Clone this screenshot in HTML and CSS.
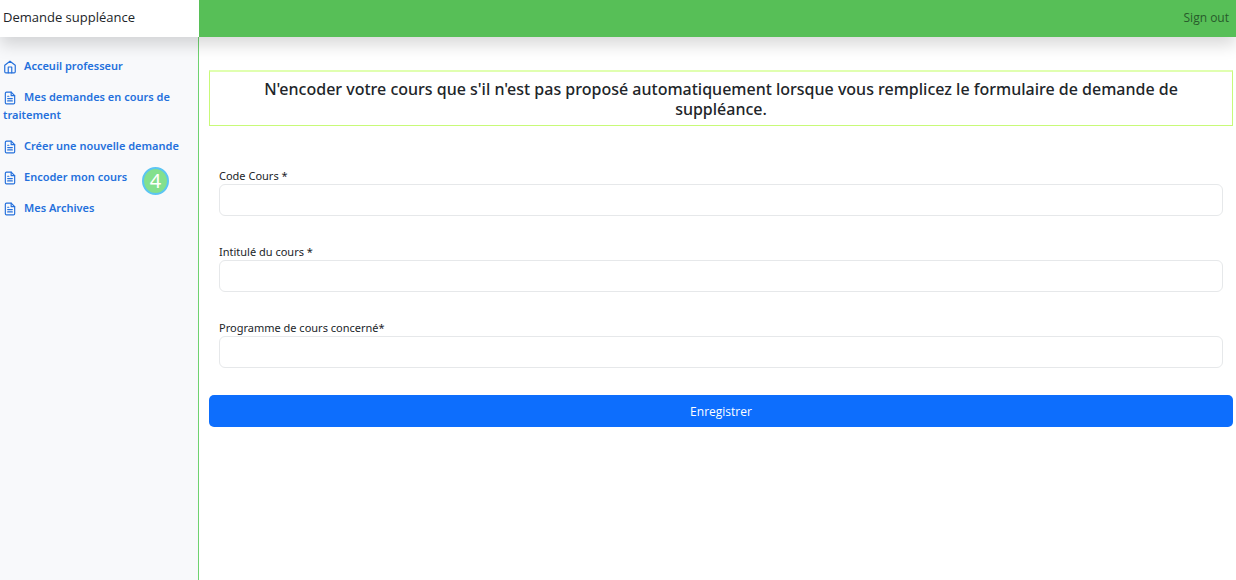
FILE: index.html
```html
<!DOCTYPE html>
<html lang="fr">
<head>
<meta charset="utf-8">
<meta name="viewport" content="width=device-width, initial-scale=1">
<title>Demande suppléance</title>
<link rel="stylesheet" href="styles.css">
</head>
<body>
<svg class="symbols" aria-hidden="true">
  <symbol id="icon-home" viewBox="0 0 24 24"><path d="M3 9l9-7 9 7v11a2 2 0 0 1-2 2H5a2 2 0 0 1-2-2z"/><path d="M9 22V12h6v10"/></symbol>
  <symbol id="icon-file" viewBox="0 0 24 24"><path d="M14 2H6a2 2 0 0 0-2 2v16a2 2 0 0 0 2 2h12a2 2 0 0 0 2-2V8z"/><path d="M14 2v6h6M16 13H8M16 17H8M10 9H8"/></symbol>
</svg>
<header class="topbar">
  <a class="brand" href="#">Demande suppléance</a>
  <a class="sign-out" href="#">Sign out</a>
</header>
<div class="layout">
  <nav class="sidebar">
    <a class="nav-link" href="#"><svg class="icon"><use href="#icon-home"/></svg>Acceuil professeur</a>
    <a class="nav-link" href="#"><svg class="icon"><use href="#icon-file"/></svg>Mes demandes en cours de traitement</a>
    <a class="nav-link" href="#"><svg class="icon"><use href="#icon-file"/></svg>Créer une nouvelle demande</a>
    <div class="nav-row">
      <a class="nav-link" href="#"><svg class="icon"><use href="#icon-file"/></svg>Encoder mon cours</a>
      <span class="step">4</span>
    </div>
    <a class="nav-link" href="#"><svg class="icon"><use href="#icon-file"/></svg>Mes Archives</a>
  </nav>
  <main class="content">
    <h1 class="notice">N'encoder votre cours que s'il n'est pas proposé automatiquement lorsque vous remplicez le formulaire de demande de suppléance.</h1>
    <form class="form">
      <div class="field"><label for="code">Code Cours *</label><input id="code" type="text"></div>
      <div class="field"><label for="title">Intitulé du cours *</label><input id="title" type="text"></div>
      <div class="field"><label for="program">Programme de cours concerné*</label><input id="program" type="text"></div>
      <button class="submit" type="submit">Enregistrer</button>
    </form>
  </main>
</div>
</body>
</html>
```
FILE: styles.css
```css
* { box-sizing: border-box; }
body {
  margin: 0;
  min-height: 100vh;
  display: flex;
  flex-direction: column;
  background: #fff;
  color: #212529;
  font-family: "Noto Sans", "Open Sans", sans-serif;
  font-size: 11px;
}
a { text-decoration: none; }
.symbols { display: none; }
.topbar {
  position: sticky;
  top: 0;
  z-index: 1;
  display: flex;
  height: 37px;
  line-height: 35px;
  background: #57bf57;
  box-shadow: 0 8px 16px rgba(0, 0, 0, .15);
}
.brand {
  width: 199px;
  padding-left: 3px;
  background: #fff;
  color: #212529;
  font-family: "Open Sans", "Noto Sans", sans-serif;
  font-size: 13px;
}
.sign-out {
  margin-left: auto;
  padding-right: 7px;
  color: #285b2b;
  font-family: "Open Sans", "Noto Sans", sans-serif;
  font-size: 12px;
}
.layout { flex: 1; display: flex; }
.sidebar {
  flex: none;
  width: 199px;
  padding-top: 20px;
  background: #f8f9fb;
  border-right: 1px solid #6fd26f;
}
.nav-link {
  display: block;
  padding: 0 16px 13px 3px;
  color: #2470dc;
  font-weight: 600;
  line-height: 18px;
}
.icon {
  width: 14px;
  height: 14px;
  margin-right: 7px;
  vertical-align: -4px;
  fill: none;
  stroke: currentColor;
  stroke-width: 2;
  stroke-linecap: round;
  stroke-linejoin: round;
}
.nav-row { position: relative; }
.step {
  position: absolute;
  top: -1px;
  left: 142px;
  width: 27px;
  height: 28px;
  border: 2px solid #5bc5f2;
  border-radius: 50%;
  background: #83e08d;
  color: #fff;
  font-size: 20px;
  line-height: 24px;
  text-align: center;
}
.content { flex: 1; min-width: 0; padding: 33px 3px 0 10px; }
.notice {
  margin: 0;
  padding: 7px 20px 6px;
  border: 1px solid #c8fa78;
  border-top: 2px solid #e0ffb0;
  font-size: 16px;
  font-weight: 500;
  line-height: 20px;
  text-align: center;
}
.form { padding-top: 41px; }
.field { padding: 0 10px 27px; }
.field label { display: block; line-height: 17px; }
.field input {
  display: block;
  width: 100%;
  height: 32px;
  padding: 0 10px;
  border: 1px solid #e6e8ea;
  border-radius: 6px;
  background: #fff;
  font: inherit;
}
.submit {
  display: block;
  width: 100%;
  height: 32px;
  border: 0;
  border-radius: 5px;
  background: #0d6efd;
  color: #fff;
  font-family: "Open Sans", "Noto Sans", sans-serif;
  font-size: 12px;
}
```
